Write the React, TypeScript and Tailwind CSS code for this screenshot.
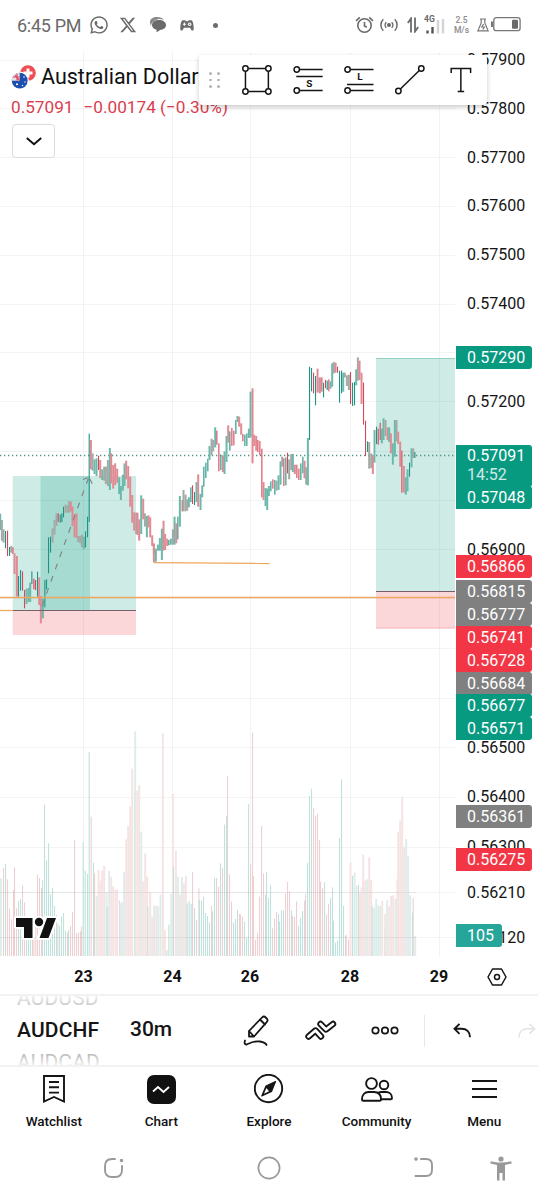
import { ReactNode } from "react";
import { FaWhatsapp, FaXTwitter } from "react-icons/fa6";

// upper case = wide bar, lower case = thin bar
type Series = { x: number; y: number; data: string };

// bars are "x high low tone", in thirds of a pixel from the origin of the series
const CANDLES: Series[] = [
  {
    x: 0,
    y: 400,
    data: "0 341 390 G,5 360 422 M,10 388 428 M,16 393 445 g,22 392 468 r,28 441 468 g,33 438 458 M,38 442 462 R,43 460 522 R,50 468 590 R,55 528 590 g,61 510 572 g,67 514 572 r,73 570 625 r,79 566 612 G,85 564 606 G,90 548 606 G,95 514 552 g,101 536 568 r,106 540 570 r,112 515 590 g,117 532 615 R,122 588 670 R,128 596 655 G,134 540 622 g,139 538 568 g,145 412 520 g,151 410 458 g,157 385 428 M,163 360 404 M,169 340 378 M,174 340 366 r,180 344 368 g,185 340 366 g,190 320 352 g,196 314 338 M,202 316 338 M,207 303 338 M,212 305 335 R,217 320 378 R,223 343 412 R,229 340 414 R,234 408 426 M,240 408 430 M,245 404 442 M,251 410 448 G,256 394 442 g,262 350 412 g,267 101 366 g,272 120 208 R,277 160 212 M,283 178 222 G,289 175 228 G,295 167 210 r,300 180 234 R,306 208 240 G,312 200 242 M,317 200 252 M,323 180 258 M,329 144 270 G,333 160 250 R,339 195 266 R,345 190 255 R,351 206 248 R,357 232 282 G,362 258 300 G,368 224 272 G,373 190 258 G,378 182 238 R,384 198 265 R,390 230 320 R,396 285 368 R,402 337 392 R,408 338 402 M,412 338 405 R,417 358 422 R,423 286 402 G,429 296 358 R,434 340 380 M,440 348 412 G,445 346 382 R,450 352 412 R,456 406 438 R,461 430 462 R",
  },
  {
    x: 140,
    y: 340,
    data: "41 612 666 R,47 626 665 G,53 614 632 G,59 594 632 G,65 566 660 G,70 542 632 R,75 582 630 R,81 596 618 R,86 600 616 g,92 596 614 G,98 568 614 M,103 530 614 G,108 550 610 R,113 530 598 g,119 468 560 G,126 480 514 r,130 450 514 M,136 464 514 M,141 478 512 M,146 472 502 G,152 442 486 g,157 436 492 r,163 456 495 g,169 426 486 G,174 403 500 R,181 462 510 G,186 436 472 G,191 380 440 g,197 368 414 g,203 356 394 g,208 318 360 G,214 296 346 M,219 300 334 M,225 262 322 G,230 272 314 r,236 310 394 r,242 344 390 g,248 346 396 R,253 334 402 G,259 288 366 G,264 256 308 R,269 274 332 g,275 264 318 r,281 272 316 r,287 240 282 g,292 228 246 G,297 230 260 R,303 250 284 R,308 282 304 r,314 284 318 g,320 280 318 g,326 266 294 G,331 155 292 G,337 145 370 R,342 284 318 R,348 288 332 R,353 300 336 r,359 303 346 r,365 326 472 r,370 426 480 R,376 444 498 G,381 446 510 G,386 438 468 G,392 424 454 g,398 418 446 r,404 420 464 g,409 422 452 M,415 406 450 G,421 364 434 G,426 350 380 M,431 355 438 r,437 352 436 g,442 338 400 r,447 358 418 M,453 342 390 M,458 342 396 G,464 374 402 R,470 374 414 r,476 386 420 r,482 370 420 g,488 350 400 g,493 362 415 R,498 382 434 M,503 294 436 G,508 80 300 g,514 84 154 g,520 98 160 r,526 108 196 g,532 86 158 R,538 115 156 M",
  },
  {
    x: 300,
    y: 340,
    data: "59 112 160 R,65 112 155 r,70 128 172 g,76 120 145 r,81 122 150 g,86 118 154 r,91 124 146 G,96 70 140 G,101 66 100 M,106 68 98 R,112 80 98 r,118 92 188 g,124 92 160 g,129 98 155 G,134 98 112 M,140 106 138 M,146 104 150 M,151 96 192 r,157 128 198 g,163 126 196 g,168 88 136 G,173 52 122 M,178 62 120 R,184 98 192 R,190 128 254 r,196 242 348 r,202 304 336 g,207 306 386 M,213 340 384 M,218 346 402 R,223 270 368 G,229 260 312 g,234 266 314 r,240 248 300 r,245 266 310 G,250 235 300 G,256 240 288 M,262 262 300 R,267 262 306 G,272 280 340 R,278 310 374 G,284 240 350 G,289 240 304 M,294 275 312 R,300 305 380 R,305 332 458 r,311 378 458 R,317 412 464 G,322 388 454 G,328 368 410 g,334 325 382 G,339 325 354 M,344 336 354 g",
  },
];

// "x top tone"
const VOLUMES: Series[] = [
  {
    x: 0,
    y: 720,
    data: "2 475 G,10 443 r,16 432 g,22 478 r,28 566 r,34 598 r,40 510 r,43 442 r,49 565 r,55 543 g,61 537 g,67 496 r,73 547 r,79 640 g,85 650 g,91 660 g,97 640 r,101 655 r,107 600 r,112 464 r,118 474 r,124 504 r,127 480 g,133 254 g,139 422 g,145 370 g,151 523 g,157 503 g,163 558 g,169 585 g,173 610 r,178 618 g,184 590 g,190 579 g,196 632 g,202 638 r,205 630 g,211 618 r,217 576 r,223 360 r,229 640 r,235 638 r,241 634 r,244 620 r,249 367 g,255 452 g,262 462 g,267 96 g,273 290 r,280 428 g,283 460 r,289 528 G,295 450 R,301 482 R,306 452 R,312 437 R,319 516 G,321 560 g,327 453 G,333 470 R,339 500 R,346 510 R,351 508 R,358 542 r,361 550 G,366 546 G,372 457 G,378 358 R,384 318 R,390 259 R,396 146 R,403 210 g,405 34 G,411 212 R,417 195 R,423 335 G,429 484 R,435 400 R,441 470 R,443 560 g,450 516 R,456 590 R,462 556 G,468 558 R,474 559 G,481 524 G,488 40 R,494 630 R,500 690 g,506 614 g,513 522 G,518 222 R,520 440 g,527 392 R,533 470 G,539 524 R,545 472 G,551 490 R,557 468 R,561 550 g,567 543 g,573 552 g,577 456 r,583 563 g,589 600 r,596 505 r,598 540 g,604 542 g,610 530 g,616 579 g,622 588 g,628 608 g,634 558 r,637 575 g,643 474 g,649 474 r,655 500 r",
  },
  {
    x: 200,
    y: 720,
    data: "61 430 g,67 445 r,73 314 g,79 288 g,82 168 r,88 463 r,94 545 r,100 607 g,106 597 g,112 570 g,118 582 r,121 583 r,127 590 r,133 605 g,139 653 g,145 252 g,151 433 r,157 38 r,160 468 r,166 660 r,172 640 r,178 530 r,184 318 r,190 461 r,196 524 g,199 456 g,205 533 g,211 496 g,217 625 r,223 597 r,229 576 r,235 582 g,238 604 g,244 571 g,250 571 g,256 520 r,262 486 r,268 513 r,274 571 g,277 588 r,283 591 r,289 544 r,295 618 g,301 594 g,307 573 g,313 542 r,316 523 r,322 428 g,328 228 g,334 206 g,340 264 r,346 287 r,352 281 r,358 360 r,361 485 r,367 505 r,373 487 g,379 583 r,385 552 r,391 534 g,397 502 g,400 602 g,406 668 g,412 662 g,418 354 g,424 178 g,430 558 g,436 648 r,438 645 r,445 658 r,451 427 R,457 468 g,463 458 G,469 497 G,475 495 g,479 520 R,484 502 R,489 404 R,495 481 R,501 478 G,507 412 R,513 480 R,516 558 g,522 564 G,528 537 G,534 556 G,540 558 G,546 543 R,553 625 g,555 582 R,561 541 G,567 559 R,573 527 R,579 526 R,586 537 G,591 478 r,594 336 R,600 302 R,606 230 R,612 380 R,618 357 G,624 408 G,630 526 G,637 578 g,639 534 r,645 648 G",
  },
];

const CANDLE_COLOR: Record<string, string> = {
  g: "#1f9482",
  r: "#d8465a",
  G: "#6ab9ab",
  R: "#e08a93",
  M: "#a3a9a5",
};

const VOLUME_COLOR: Record<string, string> = {
  g: "#bfe2dc",
  r: "#efd0d2",
  G: "#dfedea",
  R: "#f6e4e4",
};

const H_LINES = [
  60.5, 108.5, 157.5, 206.5, 255.5, 304.5, 352.5, 401.5, 451.5, 500.5, 549.5, 598.5,
  648.5, 698.5, 747.5, 797.5, 847.5, 892.5, 937.5,
];
const V_LINES = [83.5, 172.5, 250.5, 350.5, 439.5];

const SCALE = [
  { y: 60, text: "0.57900" },
  { y: 108.5, text: "0.57800" },
  { y: 157.5, text: "0.57700" },
  { y: 206, text: "0.57600" },
  { y: 255, text: "0.57500" },
  { y: 304, text: "0.57400" },
  { y: 401.5, text: "0.57200" },
  { y: 549.5, text: "0.56900" },
  { y: 748, text: "0.56500" },
  { y: 797, text: "0.56400" },
  { y: 847, text: "0.56300" },
  { y: 892.5, text: "0.56210" },
  { y: 937.5, text: "0.56120" },
];

const TAGS = [
  { y: 346, text: "0.57290", color: "bg-[#089981]" },
  { y: 486, text: "0.57048", color: "bg-[#089981]" },
  { y: 555, text: "0.56866", color: "bg-[#f23645]" },
  { y: 580, text: "0.56815", color: "bg-[#808080]" },
  { y: 603, text: "0.56777", color: "bg-[#808080]" },
  { y: 626, text: "0.56741", color: "bg-[#f23645]" },
  { y: 649, text: "0.56728", color: "bg-[#f23645]" },
  { y: 672, text: "0.56684", color: "bg-[#808080]" },
  { y: 694, text: "0.56677", color: "bg-[#089981]" },
  { y: 717, text: "0.56571", color: "bg-[#089981]" },
  { y: 805, text: "0.56361", color: "bg-[#808080]" },
  { y: 848, text: "0.56275", color: "bg-[#f23645]" },
];

function StatusBar() {
  return (
    <header className="flex h-[50px] shrink-0 items-center pl-[17px] pr-[17px] text-[#6b6b6b]">
      <span className="w-[72px] whitespace-nowrap text-[18px] tracking-[-0.3px]">6:45 PM</span>
      <FaWhatsapp size={20} />
      <FaXTwitter size={18} className="ml-[10px]" />
      <svg width="18" height="18" viewBox="0 0 18 18" className="ml-[12px]" fill="currentColor">
        <path d="M1 6C1 3 4 1 8 1c3 0 6 1 7 3-3-1.600-8-2-12 3-1.200 1.400-1 3-.5 4C1.500 9 1 8 1 6z" opacity=".8" />
        <path d="M3 9c0-3 3-5 7-5s7 2 7 5.200c0 2.500-2.500 4.500-6 4.800-1 1-3 2-4 2 .6-.7.800-1.500.6-2.300C4.600 13 3 11.300 3 9z" />
      </svg>
      <svg width="14" height="11" viewBox="0 0 16 12" className="ml-[13px]">
        <path d="M3 0h3l.8 1h2.400L10 0h3c1.600 0 3 6 2.600 10.500-.2 1.500-2 1.700-2.700.5L11.500 8.500h-7L3.100 11C2.400 12.200.6 12 .4 10.500 0 6 1.400 0 3 0z" fill="currentColor" />
        <path d="M3.200 4.500h3.600M5 2.700v3.600" stroke="#fff" strokeWidth="1.200" />
        <circle cx="11" cy="4.500" r="2" fill="#fff" />
        <circle cx="11" cy="4.500" r=".8" fill="currentColor" />
      </svg>
      <span className="ml-[19px] size-[5px] rounded-full bg-[#6b6b6b]" />
      <div className="ml-auto flex items-center">
        <svg width="19" height="18" viewBox="0 0 19 18" fill="none" stroke="currentColor" strokeWidth="1.600">
          <circle cx="9.500" cy="9.500" r="6.700" />
          <path d="M9.500 6v4l2.300 1.300M1 4.800L4.800 1.400M18 4.800l-3.800-3.400" />
        </svg>
        <svg width="18" height="14" viewBox="0 0 18 14" className="ml-[6px]" fill="none" stroke="currentColor" strokeWidth="1.500">
          <circle cx="9" cy="7" r="1.300" fill="currentColor" />
          <path d="M6.300 4.200a4 4 0 0 0 0 5.600M11.700 4.200a4 4 0 0 1 0 5.600M3.300 1.300a8 8 0 0 0 0 11.400M14.700 1.300a8 8 0 0 1 0 11.400" />
        </svg>
        <svg width="12" height="16" viewBox="0 0 12 16" className="ml-[9px]" fill="none" stroke="currentColor" strokeWidth="1.800">
          <path d="M4 15.500V1.500L.8 6M8 .500v14L11.200 10" />
        </svg>
        <svg width="22" height="20" viewBox="0 0 22 20" className="ml-[5px] mt-[-3px]">
          <text x="0" y="7.500" fontSize="8.500" fontWeight="700" fill="#6b6b6b">4G</text>
          <path d="M3.500 19.500v-3M8.500 19.500v-6.500" stroke="#555" strokeWidth="2.400" />
          <path d="M14 19.500v-13.500M19 19.500v-14.500" stroke="#d4d4d4" strokeWidth="2.400" />
        </svg>
        <div className="ml-[7px] w-[17px] text-center text-[8.500px] font-medium leading-[10px] text-[#8a8a8a]">
          2.5
          <br />
          M/s
        </div>
        <svg width="12" height="14" viewBox="0 0 12 14" className="ml-[7px]" fill="none" stroke="#777" strokeWidth="1.200">
          <path d="M3 1h6M4.200 1v4L.9 12.800h10.200L7.800 5V1" />
          <path d="M6.600 6L4.700 9h2.600L5.800 11.500" />
        </svg>
        <svg width="30" height="15" viewBox="0 0 30 15" className="ml-[2px] mt-[-2px]">
          <rect x="2.800" y=".700" width="26.300" height="13" rx="2.500" fill="none" stroke="#777" strokeWidth="1.300" />
          <path d="M1 4.500v5.500" stroke="#777" strokeWidth="2" />
          <rect x="21" y="2.700" width="6" height="9" rx="1" fill="#6b6b6b" />
        </svg>
      </div>
    </header>
  );
}

function Bars({ series, colors, base }: { series: Series[]; colors: Record<string, string>; base?: number }) {
  return (
    <>
      {series.map((s) =>
        s.data.split(",").map((bar) => {
          const parts = bar.split(" ");
          const tone = parts[parts.length - 1];
          const top = s.y + Number(parts[1]) / 3;
          const bottom = base ?? s.y + Number(parts[2]) / 3;
          const wide = tone === tone.toUpperCase();
          const w = wide ? 2 : 1.1;
          return (
            <rect
              key={`${s.x}-${bar}`}
              x={s.x + Number(parts[0]) / 3 - w / 2 + 0.2}
              y={top}
              width={w}
              height={bottom - top}
              fill={colors[tone]}
            />
          );
        })
      )}
    </>
  );
}

function Plot() {
  return (
    <svg width="456" height="907" viewBox="0 50 456 907" className="block shrink-0">
      <g stroke="#f3f3f3" strokeWidth="1">
        {H_LINES.map((y) => (
          <path key={y} d={`M0 ${y}H455`} />
        ))}
        {V_LINES.map((x) => (
          <path key={x} d={`M${x} 52V956`} />
        ))}
      </g>
      <Bars series={VOLUMES} colors={VOLUME_COLOR} base={956} />
      <path d="M0 892.500H416M0 937.500H416" stroke="#000" strokeOpacity=".05" />

      {/* positions */}
      <g fill="#089981" fillOpacity=".2">
        <rect x="12.700" y="476" width="123.300" height="134.500" />
        <rect x="40.500" y="476" width="49.500" height="134.500" />
        <rect x="376" y="358" width="79" height="233" />
      </g>
      <g fill="#f23645" fillOpacity=".2">
        <rect x="12.700" y="610.500" width="123.300" height="24.500" />
        <rect x="376" y="591" width="79" height="37.500" />
      </g>
      <path d="M376 358.500H455" stroke="#6abfad" strokeOpacity=".6" />
      <path d="M376 628H455" stroke="#f0a0a6" strokeOpacity=".6" />
      <path d="M0 455.500H455" stroke="#4b9588" strokeWidth="1.300" strokeDasharray="1.300 2.700" />

      <Bars series={CANDLES} colors={CANDLE_COLOR} />

      <path d="M42 606L88.500 478" stroke="#7d8a87" strokeWidth="1.200" strokeDasharray="6 7" fill="none" />
      <path d="M83 479.500L89 477L93 485.500" stroke="#7d8a87" strokeWidth="1.200" strokeDasharray="5 4" fill="none" />
      <path d="M12.700 610.500H136M376 591.500H455" stroke="#77606a" strokeWidth="1.200" />
      <g stroke="#f0a860" strokeWidth="1.300" fill="none">
        <path d="M0 597.500H455" />
        <path d="M0 610.500H12.700" />
        <path d="M153.500 562.700L269.500 563.500" />
      </g>

      {/* TradingView mark, white halo below the black shapes */}
      <g fill="#fff" stroke="#fff" strokeWidth="4" strokeLinejoin="round">
        <path d="M16 918H32.500V938H24V927H16z" />
        <path d="M45.500 918H56L48.500 938H38.500z" />
        <circle cx="39" cy="922" r="4.200" />
      </g>
      <g fill="#111">
        <path d="M16 918H32.500V938H24V927H16z" />
        <path d="M47 918H56L48.500 938H39.500z" />
        <circle cx="39" cy="922" r="4.200" />
      </g>
    </svg>
  );
}

function PriceScale() {
  return (
    <div className="relative flex-1 text-[16px] leading-[24px] text-[#151515]">
      {SCALE.map((s) => (
        <span key={s.text} className="absolute left-[11px]" style={{ top: s.y - 62 }}>
          {s.text}
        </span>
      ))}
      <div className="absolute left-0 top-[395px] h-[42px] w-[76px] rounded-r-[3px] bg-[#089981] pl-[11px] leading-[19px] text-white">
        <div className="pt-px">0.57091</div>
        <div className="opacity-80">14:52</div>
      </div>
      {TAGS.map((t) => (
        <span
          key={t.text}
          className={`absolute left-0 h-[23px] w-[76px] rounded-r-[3px] pl-[11px] text-white ${t.color}`}
          style={{ top: t.y - 50 }}
        >
          {t.text}
        </span>
      ))}
      <span className="absolute left-0 top-[874px] h-[23px] w-[46px] rounded-r-[3px] bg-[#26a69a] pl-[11px] text-white">
        105
      </span>
    </div>
  );
}

function Legend() {
  return (
    <div className="absolute left-[11px] top-[14px]">
      <div className="flex h-[26px] items-center">
        <svg width="26" height="26" viewBox="0 0 26 26" className="shrink-0">
          <circle cx="17" cy="9" r="7.800" fill="#f04d55" />
          <path d="M17 4.500v9M12.500 9h9" stroke="#fff" strokeWidth="3" />
          <circle cx="8.700" cy="16.700" r="9.200" fill="#fff" />
          <circle cx="8.700" cy="16.700" r="7.900" fill="#1b4fae" />
          <path d="M8.700 8.800a7.900 7.900 0 0 0-7.900 7.900h7.900z" fill="#e9dfe8" />
          <path d="M8.700 13H2M6 16.500V9.800M8.700 16.500L4 11.500" stroke="#e0485a" strokeWidth="1.200" />
          <circle cx="13" cy="13" r=".8" fill="#fff" />
          <circle cx="14" cy="18" r=".7" fill="#fff" />
          <circle cx="11.500" cy="21.500" r=".7" fill="#fff" />
          <circle cx="6" cy="20.300" r="1" fill="#fff" />
        </svg>
        <h1 className="ml-[4px] whitespace-nowrap text-[21.500px] leading-[26px] text-[#111]">Australian Dollar</h1>
      </div>
      <div className="mt-[6px] flex whitespace-nowrap text-[17.200px] leading-[22px] text-[#d9404f]">
        <span>0.57091</span>
        <span className="ml-[10px]">−0.00174 (−0.30%)</span>
      </div>
      <button className="ml-[1px] mt-[6px] flex h-[34px] w-[43px] items-center justify-center rounded-[4px] border border-[#dcdcdc] bg-white">
        <svg width="16" height="9" viewBox="0 0 16 9" fill="none" stroke="#111" strokeWidth="2">
          <path d="M.8 1L8 7.200L15.200 1" />
        </svg>
      </button>
    </div>
  );
}

function DrawingToolbar() {
  return (
    <div className="absolute left-[199px] top-[5px] flex h-[50px] w-[288px] items-center rounded-[4px] bg-white pl-[10px] shadow-[0_2px_5px_rgba(0,0,0,0.22)]">
      <div className="grid grid-cols-2 gap-x-[6px] gap-y-[4px]">
        {[0, 1, 2, 3, 4, 5].map((i) => (
          <i key={i} className="size-[2.500px] rounded-full bg-[#b5b5b5]" />
        ))}
      </div>
      <svg width="254" height="30" viewBox="0 0 254 30" className="ml-[14px]" fill="none" stroke="#151515" strokeWidth="1.500">
        {/* rectangle */}
        <path d="M14.500 3.500h17M14.500 26.500h17M11.500 6.500v17M34.500 6.500v17" />
        <circle cx="11.500" cy="3.500" r="2.700" />
        <circle cx="34.500" cy="3.500" r="2.700" />
        <circle cx="11.500" cy="26.500" r="2.700" />
        <circle cx="34.500" cy="26.500" r="2.700" />
        {/* short position */}
        <path d="M66 4.500h23M62.500 11.500h26.500M66 25.500h23" />
        <circle cx="63" cy="4.500" r="2.700" />
        <circle cx="63" cy="25.500" r="2.700" />
        <text x="75.500" y="22" textAnchor="middle" fontSize="10" fontWeight="700" fill="#151515" stroke="none">S</text>
        {/* long position */}
        <path d="M117 4.500h23M113.500 19.500h26.500M117 25.500h23" />
        <circle cx="114" cy="4.500" r="2.700" />
        <circle cx="114" cy="25.500" r="2.700" />
        <text x="126.500" y="15.500" textAnchor="middle" fontSize="10" fontWeight="700" fill="#151515" stroke="none">L</text>
        {/* trend line */}
        <path d="M167 24L186 5.500" />
        <circle cx="165" cy="26" r="2.700" />
        <circle cx="188" cy="3.500" r="2.700" />
        {/* text */}
        <path d="M218 8V3.500h19.500V8M227.700 3.500v23M224.500 26.500h6.500" />
      </svg>
    </div>
  );
}

function TimeAxis() {
  return (
    <div className="relative flex h-[39px] shrink-0 items-center border-b-2 border-[#f2f2f2] pt-[2px] text-[16px] font-bold text-[#111]">
      {[
        { x: 83.5, d: "23" },
        { x: 172.5, d: "24" },
        { x: 250, d: "26" },
        { x: 350, d: "28" },
        { x: 439, d: "29" },
      ].map((t) => (
        <span key={t.d} className="absolute -translate-x-1/2" style={{ left: t.x }}>
          {t.d}
        </span>
      ))}
      <svg width="20" height="18" viewBox="0 0 20 18" className="ml-[487px]" fill="none" stroke="#151515" strokeWidth="1.500" strokeLinejoin="round">
        <path d="M5.500 1h9L19 9l-4.500 8h-9L1 9z" />
        <circle cx="10" cy="9" r="2.500" />
      </svg>
    </div>
  );
}

function SymbolBar() {
  return (
    <div className="flex h-[71px] shrink-0 items-center border-b-2 border-[#f2f2f2] pl-[17px] text-[21px] text-[#151515]">
      <div className="relative h-full w-[113px] overflow-hidden tracking-[0.15px]">
        <div className="absolute -top-[10px] h-[24px] leading-[24px] text-[#b5b5b5]">AUDUSD</div>
        <div className="absolute top-[21px] font-medium leading-[26px]">AUDCHF</div>
        <div className="absolute top-[54px] h-[24px] leading-[24px] text-[#b5b5b5]">AUDCAD</div>
        <div className="absolute inset-x-0 top-0 h-[14px] bg-gradient-to-b from-white/80 to-transparent" />
        <div className="absolute inset-x-0 bottom-0 h-[12px] bg-gradient-to-t from-white/80 to-transparent" />
      </div>
      <span className="mt-[-2px] w-[113px] font-medium">30m</span>
      <svg width="28" height="32" viewBox="0 0 28 32" fill="none" stroke="#151515" strokeWidth="1.800" strokeLinejoin="round" strokeLinecap="round">
        <path d="M6 21.500V16L19 2.500c1.200-1.200 2.500-1.200 3.700 0l1 1c1.200 1.200 1.200 2.500 0 3.700L11 21.500zM17 4.500l5 5M6 16l5 5.500" />
        <path d="M2 25.500c-1 3 0 4.500 2 3.800 4-1.800 8-3.800 13-2.800 4 .8 6 1.500 6.500 3.500" />
      </svg>
      <svg width="34" height="22" viewBox="0 0 34 22" className="ml-[33px]" strokeLinejoin="round" strokeLinecap="round" fill="none">
        <path d="M4.500 16.500L11.500 10.500L17 16.500" stroke="#151515" strokeWidth="6.400" />
        <path d="M4.500 16.500L11.500 10.500L17 16.500" stroke="#fff" strokeWidth="2.800" />
        <path d="M16.500 4L22 9.500L29 4" stroke="#151515" strokeWidth="6.400" />
        <path d="M16.500 4L22 9.500L29 4" stroke="#fff" strokeWidth="2.800" />
      </svg>
      <svg width="28" height="9" viewBox="0 0 28 9" className="ml-[33px]" fill="none" stroke="#151515" strokeWidth="1.700">
        <circle cx="4.500" cy="4.500" r="3.200" />
        <circle cx="14" cy="4.500" r="3.200" />
        <circle cx="23.500" cy="4.500" r="3.200" />
      </svg>
      <i className="ml-[25px] h-[32px] w-px shrink-0 bg-[#e8e8e8]" />
      <svg width="18" height="15" viewBox="0 0 18 15" className="ml-[28px]" fill="none" stroke="#151515" strokeWidth="1.900">
        <path d="M6.500 .800L1.500 5.800L6.500 10.800M1.500 5.800H8.500c5 0 8.500 3 8.500 8.500" />
      </svg>
      <svg width="18" height="15" viewBox="0 0 18 15" className="ml-[47px] shrink-0" fill="none" stroke="#e3e3e3" strokeWidth="1.600">
        <path d="M11.500 .800L16.500 5.800L11.500 10.800M16.500 5.800H9.500C4.500 5.800 1 8.800 1 14.300" />
      </svg>
    </div>
  );
}

function Tab({ label, children }: { label: string; children: ReactNode }) {
  return (
    <button className="flex flex-1 flex-col items-center pt-[7px]">
      <span className="flex h-[30px] items-center justify-center">{children}</span>
      <span className="mt-[7px] text-[13.500px] font-medium leading-[20px] text-[#111]">{label}</span>
    </button>
  );
}

function TabBar() {
  return (
    <nav className="flex h-[68px] shrink-0">
      <Tab label="Watchlist">
        <svg width="22" height="28" viewBox="0 0 22 28" fill="none" stroke="#151515" strokeWidth="1.900">
          <path d="M1 1h20v25.500L11 22L1 26.500z" />
          <path d="M6 7h10M6 12.300h10M6 17.600h10" />
        </svg>
      </Tab>
      <Tab label="Chart">
        <span className="flex size-[29px] items-center justify-center rounded-[7px] bg-[#111]">
          <svg width="18" height="9" viewBox="0 0 18 9" fill="none" stroke="#fff" strokeWidth="1.800">
            <path d="M1 6.500L6 2l5.500 5L17 2" />
          </svg>
        </span>
      </Tab>
      <Tab label="Explore">
        <svg width="30" height="30" viewBox="0 0 30 30" fill="none" stroke="#151515" strokeWidth="1.900">
          <circle cx="14.500" cy="14.500" r="13.700" />
          <path d="M21.500 7.500L12 12L7.800 22L17.500 17.500z" fill="#151515" strokeWidth="1.200" strokeLinejoin="round" />
          <path d="M12.400 14L10 19.800L15 17.200z" fill="#fff" stroke="none" />
        </svg>
      </Tab>
      <Tab label="Community">
        <svg width="32" height="25" viewBox="0 0 32 25" fill="none" stroke="#151515" strokeWidth="1.900">
          <circle cx="10.500" cy="6.500" r="5.400" />
          <circle cx="23" cy="8" r="4.300" />
          <path d="M1 22.500C1 17.500 4 15 7.500 15h5.500c4 0 7 2.500 7 7.500 0 .8-.4 1.300-1.200 1.300H2.200C1.400 23.800 1 23.300 1 22.500z" />
          <path d="M17.500 15.500c1-.3 1.500-.5 2.500-.5h5c3.500 0 6 2.500 6 6 0 .8-.4 1.300-1.200 1.300H20" />
        </svg>
      </Tab>
      <Tab label="Menu">
        <svg width="25" height="20" viewBox="0 0 25 20" stroke="#151515" strokeWidth="2.200">
          <path d="M0 2h25M0 10h25M0 18h25" />
        </svg>
      </Tab>
    </nav>
  );
}

function SystemNav() {
  return (
    <footer className="flex flex-1 items-center pl-[103px] pt-px">
      <svg width="22" height="22" viewBox="0 0 22 22" fill="none" stroke="#999" strokeWidth="1.900" strokeLinecap="round">
        <path d="M12 2H9Q2 2 2 9v4q0 7 7 7h3q7 0 7-7V9" />
        <circle cx="18.500" cy="3.500" r=".8" fill="#999" />
      </svg>
      <svg width="24" height="24" viewBox="0 0 24 24" className="ml-[132px]" fill="none" stroke="#999" strokeWidth="1.700">
        <circle cx="12" cy="12" r="10.600" />
      </svg>
      <svg width="20" height="22" viewBox="0 0 20 22" className="ml-[133px]" fill="none" stroke="#999" strokeWidth="1.900" strokeLinecap="round">
        <path d="M7 2h5q6 0 6 6v5q0 6-6 6H1.500" />
        <circle cx="2" cy="2" r=".8" fill="#999" />
      </svg>
      <svg width="22" height="25" viewBox="0 0 22 25" className="ml-[56px]" fill="#999">
        <circle cx="11" cy="3" r="2.600" />
        <path d="M.8 5.200C7 7 15 7 21.200 5.200l.5 2.300-6.700 1.400V24.500h-2.500V17h-3v7.500H7V8.900L.3 7.500z" />
      </svg>
    </footer>
  );
}

export default function App() {
  return (
    <div className="flex h-[1200px] w-[538px] flex-col overflow-hidden bg-white font-[Roboto,sans-serif]">
      <StatusBar />
      <main className="relative flex h-[907px] shrink-0">
        <Plot />
        <PriceScale />
        <Legend />
        <DrawingToolbar />
      </main>
      <TimeAxis />
      <SymbolBar />
      <TabBar />
      <SystemNav />
    </div>
  );
}
